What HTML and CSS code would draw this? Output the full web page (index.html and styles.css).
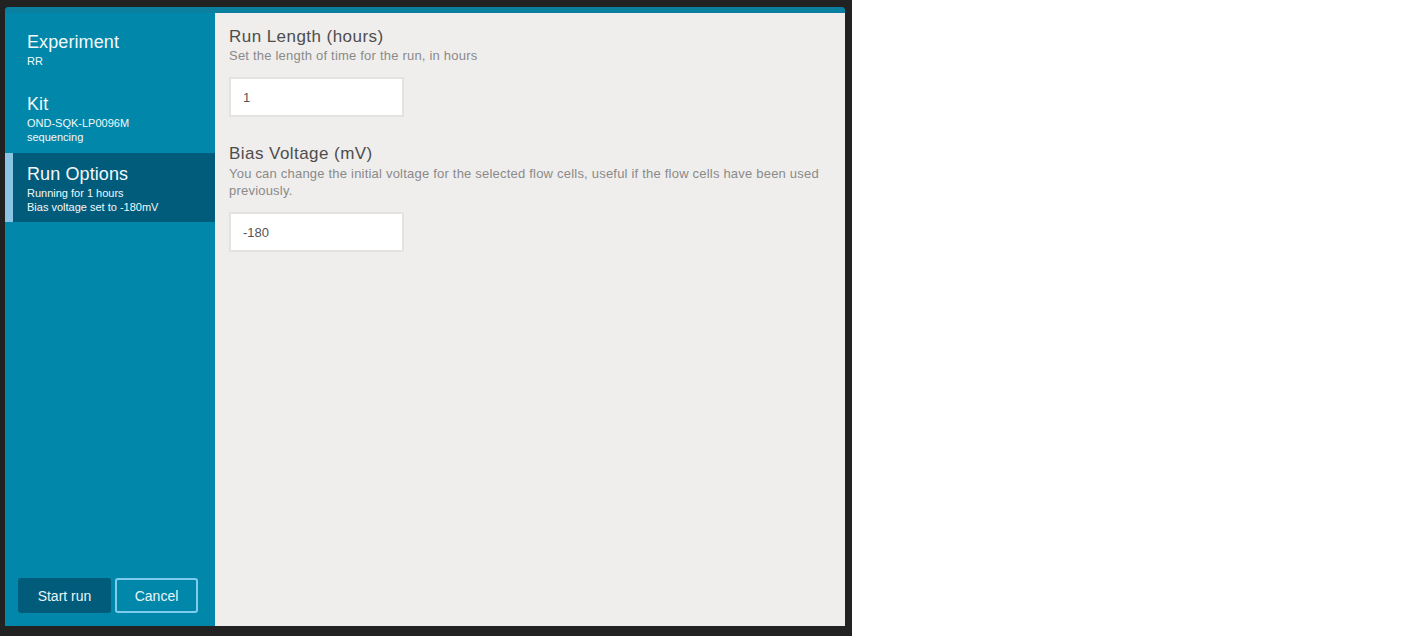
FILE: index.html
```html
<!DOCTYPE html>
<html>
<head>
<meta charset="utf-8">
<link rel="stylesheet" href="styles.css">
</head>
<body>
<div class="screen">
  <div class="modal">
    <div class="topbar"></div>
    <div class="body">
      <aside class="sidebar">
        <div class="steps">
          <div class="step step-first">
            <div class="step-title">Experiment</div>
            <div class="step-sub">RR</div>
          </div>
          <div class="step">
            <div class="step-title">Kit</div>
            <div class="step-sub">OND-SQK-LP0096M</div>
            <div class="step-sub">sequencing</div>
          </div>
          <div class="step step-active">
            <div class="step-title">Run Options</div>
            <div class="step-sub">Running for 1 hours</div>
            <div class="step-sub">Bias voltage set to -180mV</div>
          </div>
        </div>
        <div class="actions">
          <button class="btn btn-primary">Start run</button>
          <button class="btn btn-outline">Cancel</button>
        </div>
      </aside>
      <main class="content">
        <section class="field">
          <h2 class="field-title">Run Length (hours)</h2>
          <p class="field-desc">Set the length of time for the run, in hours</p>
          <input class="field-input" type="text" value="1">
        </section>
        <section class="field field-second">
          <h2 class="field-title">Bias Voltage (mV)</h2>
          <p class="field-desc">You can change the initial voltage for the selected flow cells, useful if the flow cells have been used previously.</p>
          <input class="field-input" type="text" value="-180">
        </section>
      </main>
    </div>
  </div>
</div>
</body>
</html>
```

FILE: styles.css
```css
* { box-sizing: border-box; }
html, body { margin: 0; padding: 0; background: #ffffff; }
body { font-family: "Liberation Sans", Arial, sans-serif; }

.screen {
  width: 852px;
  height: 636px;
  background: #222222;
  padding: 7px 7px 10px 5px;
}

.modal {
  width: 840px;
  height: 619px;
  display: flex;
  flex-direction: column;
  border-radius: 4px 4px 0 0;
  overflow: hidden;
  background: #0087a9;
}

.topbar {
  height: 6px;
  background: #0b7fa0;
  flex: none;
}

.body {
  flex: 1;
  display: flex;
  min-height: 0;
}

.sidebar {
  width: 210px;
  flex: none;
  background: #0087a9;
  display: flex;
  flex-direction: column;
  justify-content: space-between;
  padding: 8px 0 13px 0;
  color: #f2f9fc;
}

.step {
  padding: 10px 12px 9px 22px;
}
.step-first { padding-bottom: 15px; }
.step-active {
  background: #005c7a;
  border-left: 8px solid #8cc4e5;
  padding-left: 14px;
  padding-bottom: 8px;
}

.step-title {
  font-size: 18px;
  line-height: 23px;
  letter-spacing: 0.1px;
}
.step-sub {
  font-size: 11px;
  line-height: 14px;
}

.actions {
  display: flex;
  gap: 4px;
  padding-left: 13px;
}

.btn {
  font-family: "Liberation Sans", Arial, sans-serif;
  font-size: 14px;
  height: 35px;
  border-radius: 3px;
  color: #e8f6fb;
  cursor: pointer;
}
.btn-primary {
  width: 93px;
  background: #005c7a;
  border: none;
}
.btn-outline {
  width: 83px;
  background: transparent;
  border: 2px solid #7fcdee;
}

.content {
  flex: 1;
  background: #efeeec;
  padding: 14px 14px;
  color: #4a4a4a;
}

.field-title {
  margin: 0;
  font-size: 17px;
  line-height: 20px;
  font-weight: normal;
  letter-spacing: 0.45px;
  color: #4d4d4d;
}
.field-desc {
  margin: 0;
  font-size: 13px;
  line-height: 17px;
  letter-spacing: 0.21px;
  color: #8a8a8a;
  max-width: 606px;
}
.field-input {
  display: block;
  margin-top: 13px;
  width: 175px;
  height: 40px;
  background: #ffffff;
  border: 2px solid #e3e3e1;
  padding: 0 12px;
  font-family: "Liberation Sans", Arial, sans-serif;
  font-size: 13px;
  color: #555555;
  outline: none;
}
.field-second { margin-top: 27px; }
.field-second .field-desc { margin-top: 1px; }
.field-second .field-input { margin-top: 13px; }
```
